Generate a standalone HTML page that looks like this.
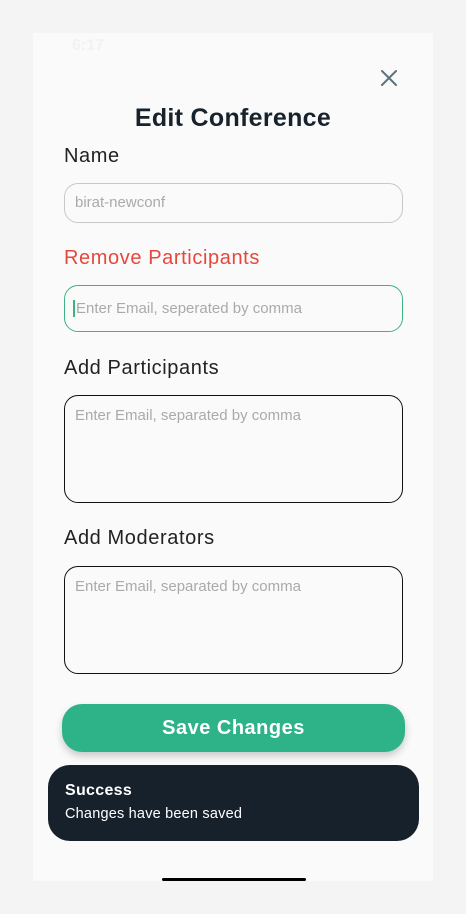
<!DOCTYPE html>
<html><head><style>
*{margin:0;padding:0;box-sizing:border-box}
body{width:466px;height:914px;background:#f4f4f4;font-family:"Liberation Sans",sans-serif;position:relative;overflow:hidden}
.panel{position:absolute;left:33px;top:33px;width:400px;height:848px;background:#fafafa}
.a{position:absolute}
.lbl{position:absolute;left:64px;font-size:20px;color:#222;letter-spacing:0.6px}
.in{position:absolute;left:64px;width:339px;border-radius:14px;font-size:15px;color:#aaa;padding-left:10px}
</style></head><body>
<div class="panel"></div>
<div class="a" style="left:72px;top:37px;color:#f2f2f2;font-size:16px;font-weight:bold">6:17</div>
<svg class="a" style="left:380px;top:69px" width="18" height="18" viewBox="0 0 18 18"><path d="M2 2L16 16M16 2L2 16" stroke="#5c7380" stroke-width="2" stroke-linecap="round"/></svg>
<div class="a" style="left:0;width:466px;top:104px;text-align:center;font-size:25px;font-weight:bold;color:#17222c;letter-spacing:0.3px">Edit Conference</div>
<div class="lbl" style="top:145px">Name</div>
<div class="in" style="top:183px;height:40px;border:1px solid #c8c8c8;line-height:38px">birat-newconf</div>
<div class="lbl" style="top:247px;color:#e5473d">Remove Participants</div>
<div class="in" style="top:285px;height:47px;border:1px solid #3cb383;line-height:45px;padding-left:8px"><span style="border-left:2px solid #3cb383;padding-left:1px">Enter Email, seperated by comma</span></div>
<div class="lbl" style="top:357px">Add Participants</div>
<div class="in" style="top:395px;height:108px;border:1px solid #111;padding-top:11px">Enter Email, separated by comma</div>
<div class="lbl" style="top:527px">Add Moderators</div>
<div class="in" style="top:566px;height:108px;border:1px solid #111;padding-top:11px">Enter Email, separated by comma</div>
<div class="a" style="left:62px;top:704px;width:343px;height:48px;border-radius:20px;background:#2db387;color:#fff;font-size:20px;font-weight:bold;text-align:center;line-height:48px;letter-spacing:0.5px;box-shadow:0 4px 8px rgba(0,0,0,.2)">Save Changes</div>
<div class="a" style="left:48px;top:765px;width:371px;height:76px;border-radius:22px;background:#16212b;color:#fff;padding:17px 0 0 17px">
<div style="font-size:16px;font-weight:bold;letter-spacing:0.3px">Success</div>
<div style="font-size:14.5px;margin-top:6px;letter-spacing:0.2px">Changes have been saved</div></div>
<div class="a" style="left:162px;top:878px;width:144px;height:3px;background:#000;border-radius:2px"></div>
</body></html>
